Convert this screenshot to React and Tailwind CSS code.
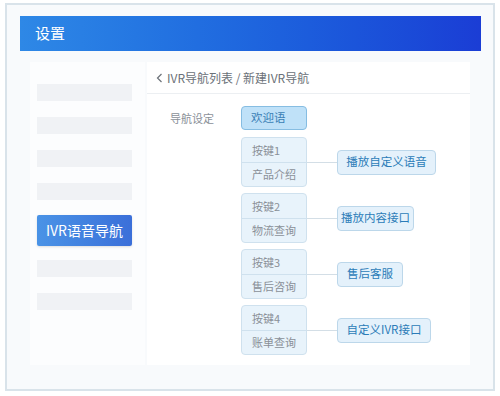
import React from "react";

const font = { fontFamily: '"Noto Sans CJK SC", "Noto Sans", sans-serif' };

function KeyRow({ k, name, action, actionW }) {
  return (
    <div className="flex items-center">
      <div className="w-[66px] h-[50px] rounded-[4px] border border-[#cfe1ee] bg-[#e8f3fb] flex flex-col text-[11px] text-[#8a9098]">
        <div className="h-[25px] flex items-center pl-[10px] border-b border-[#cfe1ee]">{k}</div>
        <div className="flex-1 flex items-center pl-[10px]">{name}</div>
      </div>
      <div className="w-[30px] h-px bg-[#d3dee6]" />
      <div
        className="h-[25px] rounded-[4px] border border-[#bcd7ea] bg-[#e4f1fb] flex items-center justify-center text-[11.5px] text-[#2b7cb8]"
        style={{ width: actionW }}
      >
        {action}
      </div>
    </div>
  );
}

export default function App() {
  const bars = [0, 1, 2, 3];
  return (
    <div className="w-[500px] h-[396px] bg-white pt-[3px] pl-[5px]" style={font}>
      <div className="w-[490px] h-[388px] border-2 border-[#d9e3ea] bg-[#f8fafc] pt-[11px] pl-[13px]">
        <div className="w-[461px] h-[35px] bg-gradient-to-r from-[#2e88e6] to-[#1b3dd5] flex items-center pl-[15px] text-white text-[15px]">
          设置
        </div>
        <div className="flex mt-[11px] ml-[10px] gap-[2px]">
          <div className="w-[115px] h-[303px] bg-[#fcfdfe] pt-[22px] pl-[7px] flex flex-col">
            {bars.map((i) => (
              <div key={i} className="w-[95px] h-[17px] bg-[#f0f2f5] mb-[16px]" />
            ))}
            <div className="w-[95px] h-[31px] rounded-[2px] bg-gradient-to-r from-[#4a93e6] to-[#3b6fd9] text-white text-[14px] flex items-center justify-center shadow-sm -mt-[1px] mb-[14px]">
              IVR语音导航
            </div>
            <div className="w-[95px] h-[17px] bg-[#f0f2f5] mb-[16px]" />
            <div className="w-[95px] h-[17px] bg-[#f0f2f5]" />
          </div>
          <div className="w-[323px] h-[303px] bg-white">
            <div className="h-[32px] border-b border-[#eceff2] flex items-center pl-[9px] text-[12px] text-[#6b7178]">
              <svg width="7" height="10" viewBox="0 0 7 10" className="mr-[4px]">
                <path d="M5.5 1 L1.5 5 L5.5 9" fill="none" stroke="#6b7178" strokeWidth="1.2" />
              </svg>
              IVR导航列表 / 新建IVR导航
            </div>
            <div className="flex items-center mt-[12px]">
              <div className="w-[94px] pl-[23px] text-[11px] text-[#8a9098]">导航设定</div>
              <div className="w-[66px] h-[24px] rounded-[4px] border border-[#86bde2] bg-[#bfe1f8] flex items-center pl-[9px] text-[11.5px] text-[#3a7fb5]">
                欢迎语
              </div>
            </div>
            <div className="ml-[94px] mt-[7px] flex flex-col gap-[6px]">
              <KeyRow k="按键1" name="产品介绍" action="播放自定义语音" actionW={99} />
              <KeyRow k="按键2" name="物流查询" action="播放内容接口" actionW={77} />
              <KeyRow k="按键3" name="售后咨询" action="售后客服" actionW={66} />
              <KeyRow k="按键4" name="账单查询" action="自定义IVR接口" actionW={94} />
            </div>
          </div>
        </div>
      </div>
    </div>
  );
}
